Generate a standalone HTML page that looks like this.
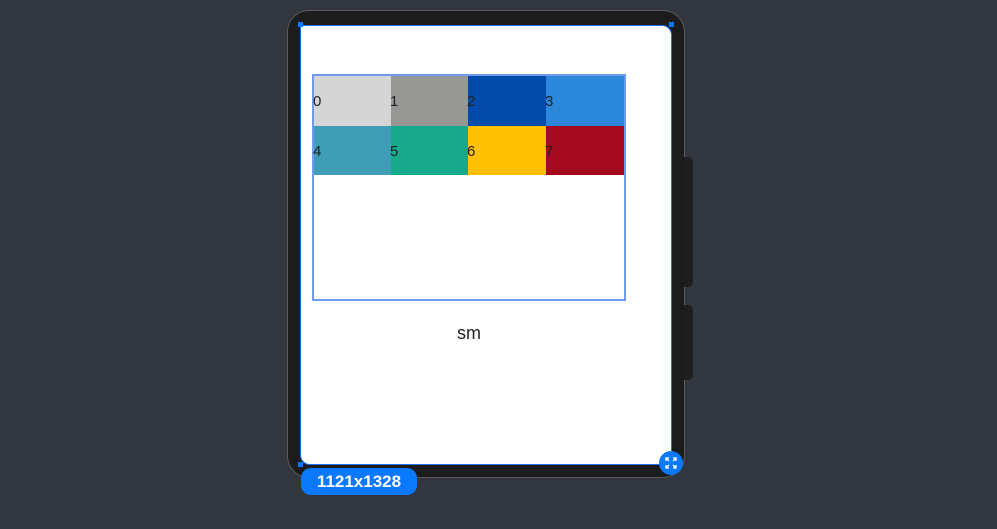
<!DOCTYPE html>
<html><head><style>
body{margin:0;width:997px;height:529px;background:#32363f;position:relative;overflow:hidden;font-family:"Liberation Sans",sans-serif}
.frame{position:absolute;left:287px;top:10px;width:398px;height:468px;border-radius:22px;background:#1c1c1c;border:1px solid #5a5a5a;box-sizing:border-box}
.btn{position:absolute;left:684px;width:9px;background:#1e1e1e;border-radius:0 5px 5px 0}
.screen{position:absolute;left:300px;top:25px;width:372px;height:440px;background:#fff;border:1px solid #1a73f0;box-sizing:border-box;border-radius:0 10px 0 10px}
.grid{position:absolute;left:312px;top:74px;width:314px;height:227px;border:2px solid #6f9bef;box-sizing:border-box}
.c{position:absolute;width:78px;height:50px;font-size:15px;color:#222;line-height:52px;text-indent:-1px}
.sm{position:absolute;left:312px;width:314px;top:323px;text-align:center;font-size:18px;color:#222}
.pill{position:absolute;left:301px;top:468px;width:116px;height:27px;border-radius:10px;background:#0a78ff;color:#fff;font-size:17px;font-weight:bold;text-align:center;line-height:28px}
.exp{position:absolute;left:659px;top:451px;width:24px;height:24px;border-radius:50%;background:#0a78ff}
.h{position:absolute;width:5px;height:5px;background:#0a78ff}
</style></head><body>
<div class="frame"></div>
<div class="btn" style="top:157px;height:130px"></div>
<div class="btn" style="top:305px;height:75px"></div>
<div class="screen"></div>
<div class="h" style="left:298px;top:22px"></div>
<div class="h" style="left:669px;top:22px"></div>
<div class="h" style="left:298px;top:462px"></div>
<div class="grid">
<div class="c" style="left:0;top:0;background:#d4d5d4">0</div>
<div class="c" style="left:77px;top:0;background:#979796">1</div>
<div class="c" style="left:154px;top:0;background:#034bab">2</div>
<div class="c" style="left:232px;top:0;background:#2a87d9">3</div>
<div class="c" style="left:0;top:50px;height:49px;background:#3f9db5">4</div>
<div class="c" style="left:77px;top:50px;height:49px;background:#17a98a">5</div>
<div class="c" style="left:154px;top:50px;height:49px;background:#fec000">6</div>
<div class="c" style="left:232px;top:50px;height:49px;background:#a50a21">7</div>
</div>
<div class="sm">sm</div>
<div class="pill">1121x1328</div>
<div class="exp"><svg width="24" height="24" viewBox="0 0 24 24" fill="none" stroke="#fff" stroke-width="1.3"><path d="M7 10V7h3M7 7l3 3M17 10V7h-3M17 7l-3 3M7 14v3h3M7 17l3-3M17 14v3h-3M17 17l-3-3"/></svg></div>
</body></html>
